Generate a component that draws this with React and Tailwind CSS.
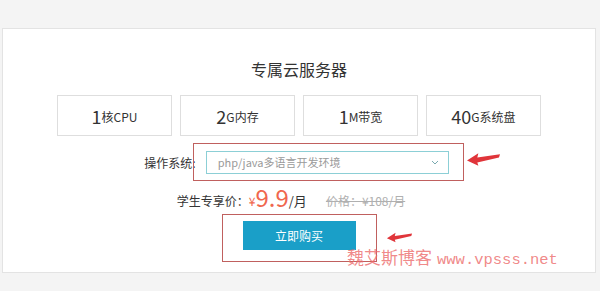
import React from "react";

const specs = [
  { big: "1", small: "核CPU" },
  { big: "2", small: "G内存" },
  { big: "1", small: "M带宽" },
  { big: "40", small: "G系统盘" },
];

const Arrow = ({ className }) => (
  <svg className={className} viewBox="0 0 32 14" fill="none">
    <path d="M0 8 L11 1 L10 5 L32 2 L31 5 L10 10 L11 13 Z" fill="#e0353a" />
  </svg>
);

export default function App() {
  return (
    <div
      className="relative w-[600px] h-[291px] bg-[#f4f4f4] pt-[28px] pl-[2px] overflow-hidden"
      style={{ fontFamily: '"Noto Sans CJK SC", "Noto Sans", sans-serif' }}
    >
      <div className="w-[594px] h-[245px] bg-white border border-[#e3e3e3] flex flex-col items-center">
        <div className="pt-[29px] text-[16px] leading-[22px] text-[#333]">专属云服务器</div>

        <div className="mt-[15px] flex gap-[8px]">
          {specs.map((s, i) => (
            <div
              key={i}
              className="w-[115px] h-[41px] border border-[#dedede] flex items-center justify-center text-[#333]"
            >
              <span className="text-[18px] leading-none">{s.big}</span>
              <span className="text-[12px] leading-none mt-[2px]">{s.small}</span>
            </div>
          ))}
        </div>

        <div className="mt-[15px] flex items-center gap-[10px] mr-[5px]">
          <span className="text-[12px] text-[#333]">操作系统:</span>
          <div className="w-[243px] h-[23px] border border-[#8ccfd6] flex items-center justify-between pl-[11px] pr-[9px]">
            <span className="text-[11px] text-[#9a9a9a]">php/java多语言开发环境</span>
            <svg width="8" height="5" viewBox="0 0 8 5" fill="none">
              <path d="M1 1 L4 4 L7 1" stroke="#7aaab0" strokeWidth="1" />
            </svg>
          </div>
        </div>

        <div className="mt-[10px] flex items-end h-[26px] mr-[16px]">
          <span className="text-[12px] text-[#333] leading-[18px]">学生专享价：</span>
          <span className="text-[12px] text-[#f0674e] leading-[18px]">¥</span>
          <span className="text-[24px] text-[#f0674e] leading-[26px]">9.9</span>
          <span className="text-[13px] text-[#333] leading-[18px]">/月</span>
          <span className="ml-[19px] text-[12px] text-[#b0b0b0] leading-[18px] line-through">价格：¥108/月</span>
        </div>

        <button className="mt-[11px] w-[113px] h-[29px] bg-[#1a9fc8] text-white text-[12px] flex items-center justify-center">
          立即购买
        </button>
      </div>

      {/* annotations */}
      <div className="absolute left-[193px] top-[143px] w-[271px] h-[38px] border border-[#c0605e]" />
      <Arrow className="absolute left-[467px] top-[152px] w-[33px] h-[15px]" />
      <div className="absolute left-[222px] top-[214px] w-[155px] h-[48px] border border-[#c0605e]" />
      <Arrow className="absolute left-[384px] top-[232px] w-[31px] h-[11px]" />
      <div className="absolute left-[347px] top-[244px] flex items-baseline text-[#ec6a6a]/80 whitespace-nowrap">
        <span className="text-[17px]">魏艾斯博客</span>
        <span className="ml-[5px] text-[15.5px]" style={{ fontFamily: '"Liberation Mono", monospace' }}>
          www.vpsss.net
        </span>
      </div>
    </div>
  );
}
